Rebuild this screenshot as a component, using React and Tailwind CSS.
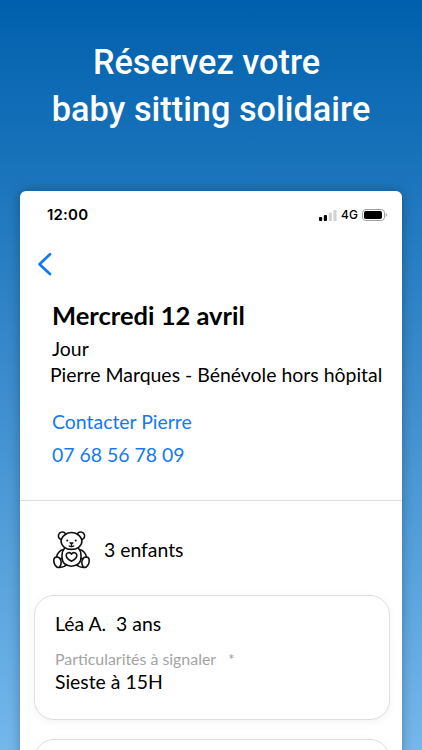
import clsx from 'clsx';

const children = [
  { name: 'Léa A.', age: '3 ans', note: 'Sieste à 15H' },
];

function StatusBar() {
  return (
    <div className="flex h-12 items-center justify-between pl-[27px] pr-[15px] font-['Inter'] text-black">
      <span className="text-[15px] font-semibold leading-5 tracking-[0.2px]">12:00</span>
      <div className="flex items-center">
        <svg className="h-[11px] w-[18px]" viewBox="0 0 18 11">
          <rect x="0" y="7" width="3.2" height="4" rx="0.9" fill="#000" />
          <rect x="4.8" y="5" width="3.2" height="6" rx="0.9" fill="#000" />
          <rect x="9.7" y="2.6" width="3.2" height="8.4" rx="0.9" fill="#d2d2d2" />
          <rect x="14.4" y="0" width="3.2" height="11" rx="0.9" fill="#d2d2d2" />
        </svg>
        <span className="ml-[4px] w-[17px] text-[12px] font-medium leading-4">4G</span>
        <svg className="ml-[4px] h-3 w-[25px]" viewBox="0 0 25 12">
          <rect x="0.5" y="0.5" width="22" height="11" rx="3.3" fill="none" stroke="#a0a0a0" />
          <rect x="2" y="2" width="18" height="8" rx="1.8" fill="#000" />
          <path d="M23.700 4v4c.8-.4 1.200-1.100 1.200-2s-.4-1.600-1.200-2z" fill="#a0a0a0" />
        </svg>
      </div>
    </div>
  );
}

function BackButton() {
  return (
    <button className="flex h-[50px] items-center pl-[17px]">
      <svg className="h-6 w-[15px]" viewBox="0 0 15 24" fill="none" stroke="#0f7af5" strokeWidth="2.7" strokeLinecap="round" strokeLinejoin="round">
        <path d="M13 2.200L2.500 12.200l10.500 9.800" />
      </svg>
    </button>
  );
}

function TeddyBear() {
  return (
    <svg className="h-[38px] w-[38px]" viewBox="0 0 38 38" fill="none" stroke="#111" strokeWidth="1.600" strokeLinecap="round" strokeLinejoin="round">
      {/* ears and head */}
      <path d="M8.200 8.600C5.300 8 4.600 4.400 6.300 2.400 8.100.4 11.700.6 12.700 3.200" />
      <path d="M28.800 8.600c2.900-.6 3.600-4.200 1.900-6.200-1.800-2-5.400-1.800-6.400.8" />
      <path d="M12.700 3.200C15.200.9 21.800.9 24.300 3.200c2.600 1.600 4.300 4 4.600 6.700.2 5-4.600 8.500-10.400 8.500S7.900 14.900 8.100 9.900c.3-2.700 2-5.100 4.600-6.700z" />
      <circle cx="14.300" cy="9.600" r="1" fill="#111" stroke="none" />
      <circle cx="22.700" cy="9.600" r="1" fill="#111" stroke="none" />
      <path d="M17 11.800h3L18.500 13.200zM18.500 13.200v1.700M16.300 15c.8.700 3.600.7 4.400 0" strokeWidth="1.300" />
      {/* tummy */}
      <path d="M11.600 17.300C8.200 20.600 8 29.300 11.400 32.600c3.700 3.500 10.500 3.500 14.200 0 3.400-3.300 3.200-12-.2-15.300" />
      <path d="M18.500 30.200c-2.300-1.200-5.300-3.300-5.300-5.800 0-3 3.900-3.700 5.300-1.200 1.400-2.500 5.300-1.800 5.300 1.200 0 2.500-3 4.600-5.300 5.800z" />
      {/* arms */}
      <path d="M10 18.800c-3 .5-6 3.600-6.400 6.900M27 18.800c3 .5 6 3.600 6.400 6.900" />
      <path d="M7.600 27.500c.5.400 1.100.3 1.500-.1M29.400 27.500c-.5.400-1.100.3-1.500-.1" />
      {/* feet */}
      <path d="M7.300 28C5.800 25.200 1.400 25.200.9 28.400c-.4 2.900.9 6 3 7.700 3.300.8 7.700-.2 9.700-2.300" />
      <path d="M7.300 28c1.100 2.300 1 5.600-.5 7.800" />
      <path d="M29.700 28c1.500-2.800 5.900-2.800 6.400.4.400 2.900-.9 6-3 7.700-3.300.8-7.700-.2-9.700-2.300" />
      <path d="M29.700 28c-1.100 2.300-1 5.600.5 7.800" />
    </svg>
  );
}

function ChildCard({ child, className }) {
  return (
    <div className={clsx('h-[125px] rounded-[20px] border border-[#dedede] bg-white px-5 pt-[15px] shadow-[0_2px_10px_rgba(0,0,0,0.05)]', className)}>
      {child && (
        <>
          <p className="whitespace-pre text-[19.4px] leading-[26px]">{child.name}{'  '}{child.age}</p>
          <p className="mt-[12px] flex text-[15.9px] leading-5 text-[#a3a3a3]">
            Particularités à signaler <span className="ml-[12px] text-[15.9px] leading-[19px]">*</span>
          </p>
          <p className="text-[19.4px] leading-[26px]">{child.note}</p>
        </>
      )}
    </div>
  );
}

export default function App() {
  return (
    <div className="h-[750px] w-[422px] overflow-hidden bg-linear-to-b/srgb from-[#0060ad] to-[#74b7eb]">
      <h1 className="h-[191px] pt-[39px] text-center font-['Roboto'] text-[34.3px] font-medium leading-[47px] text-white">
        <span className="block pr-[9px]">Réservez votre</span>
        <span className="block">baby sitting solidaire</span>
      </h1>

      <main className="mx-5 h-[600px] w-[382px] rounded-t-[6px] bg-white font-['Lato'] text-black shadow-[0_0_12px_rgba(0,0,0,0.28)]">
        <StatusBar />
        <BackButton />

        <section className="h-[212px] border-b border-[#dedede] pl-8 pt-[11px]">
          <h2 className="text-[25.5px] font-bold leading-[30px]">Mercredi 12 avril</h2>
          <p className="mt-[6px] text-[19.4px] leading-[26px]">Jour</p>
          <p className="-ml-[2px] whitespace-nowrap text-[19.45px] leading-[26px]">Pierre Marques - Bénévole hors hôpital</p>
          <div className="mt-[17px] flex flex-col text-[19.45px] leading-[33px] text-[#127af0]">
            <a>Contacter Pierre</a>
            <a>07 68 56 78 09</a>
          </div>
        </section>

        <section>
          <div className="flex h-[94px] items-center gap-[13px] pl-[33px] pt-[3px]">
            <TeddyBear />
            <span className="text-[19.4px] leading-[26px]">3 enfants</span>
          </div>
          <div className="flex flex-col gap-[19px] pl-[14px] pr-3">
            {children.map((child) => (
              <ChildCard key={child.name} child={child} />
            ))}
            <ChildCard />
          </div>
        </section>
      </main>
    </div>
  );
}
